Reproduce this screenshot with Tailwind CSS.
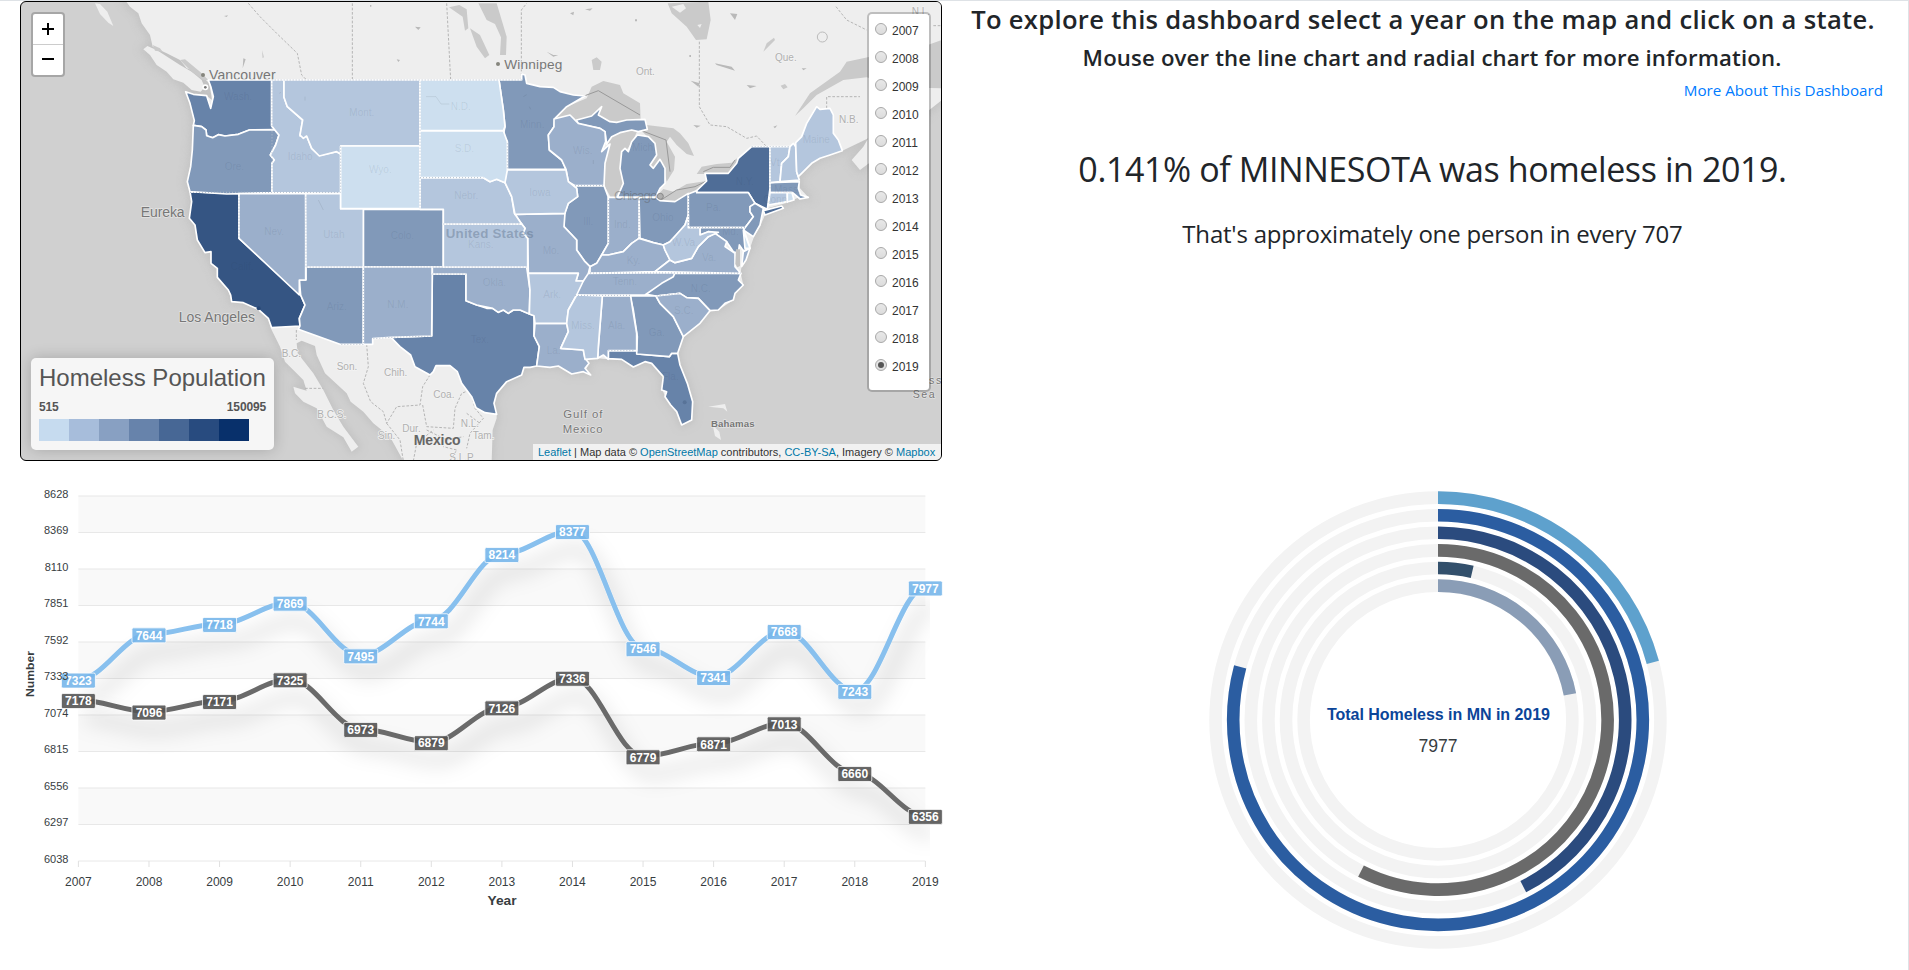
<!DOCTYPE html>
<html lang="en">
<head>
<meta charset="utf-8">
<title>Homeless Population Dashboard</title>
<script src="https://cdn.jsdelivr.net/npm/@tailwindcss/browser@4"></script>
</head>
<body class="bg-white w-[1909px] h-[970px] overflow-hidden font-['Liberation_Sans',sans-serif]">
<div class="flex h-[970px] border-t border-r border-[#dee2e6]">
  <section class="w-[954px] shrink-0 flex flex-col">
    <div class="relative ml-5 w-[922px] h-[460px] rounded-[6px] border border-black overflow-hidden bg-[#d0d0d0]">
      <svg class="absolute -left-px -top-px w-[922px] h-[460px]" viewBox="60 3 2766 1380" font-family="Liberation Sans, Arial, sans-serif">
        <defs>
          <filter id="coast" x="-5%" y="-5%" width="110%" height="110%"><feGaussianBlur stdDeviation="12"/></filter>
          <path id="land" d="M375,0 390,20 415,40 425,70 450,105 458,140 500,160 540,180 560,205 590,215 612,235 628,250 636,300 620,287 580,283 557,275 570,310 583,362 580,376 577,450 572,500 562,545 570,575 575,605 568,655 585,675 592,720 615,758 633,755 633,790 652,805 652,832 685,870 695,905 730,908 775,928 805,955 815,990 840,1040 855,1085 910,1140 920,1172 880,1160 885,1180 910,1205 950,1225 980,1280 1030,1312 1055,1355 1075,1340 1030,1280 1000,1230 970,1170 940,1120 893,1060 890,1030 905,1022 945,1038 950,1065 975,1120 1040,1180 1052,1205 1090,1235 1120,1270 1170,1310 1210,1383 1475,1383 1478,1290 1490,1255 1490,1243 1482,1210 1490,1180 1520,1145 1565,1125 1572,1102 1610,1098 1650,1102 1675,1098 1715,1122 1750,1115 1772,1125 1758,1108 1765,1095 1755,1078 1793,1075 1825,1078 1865,1078 1900,1100 1935,1085 1955,1090 1990,1130 1988,1170 1995,1190 2030,1235 2045,1275 2075,1260 2078,1205 2062,1150 2040,1095 2033,1060 2050,1010 2100,970 2130,932 2155,930 2200,900 2205,880 2230,855 2222,820 2225,795 2250,745 2262,710 2282,675 2295,645 2302,625 2362,608 2400,590 2425,592 2400,565 2395,530 2435,490 2460,475 2527,452 2605,415 2590,440 2555,480 2580,510 2620,480 2700,400 2826,300 2826,0Z"/>
        </defs>
        <g fill="#c3c3c3" stroke="#bcbcbc" stroke-width="14" filter="url(#coast)" opacity=".8"><use href="#land"/><path d="M430,148 452,140 540,190 600,235 610,272 575,272 520,235 500,215 470,195Z"/></g>
        <use href="#land" fill="#eee"/>
        <g fill="#eee">
          <path d="M430,148 442,138 470,150 540,195 575,215 605,240 614,262 602,275 575,270 550,248 520,238 500,215 470,195 450,165Z"/>
          <path d="M285,10 300,12 322,35 340,78 325,68 300,42Z"/>
          <path d="M2125,1220 2175,1212 2182,1235 2170,1225ZM2138,1275 2158,1295 2163,1320 2145,1308Z"/>
        </g>
        <g fill="#cacaca">
          <path d="M1665,355 1700,320 1760,295 1775,260 1810,243 1860,255 1870,280 1895,295 1920,310 1922,360 1830,368 1795,345 1805,320 1775,348 1730,362Z"/>
          <path d="M1815,425 1835,405 1860,398 1890,383 1912,392 1900,420 1880,450 1860,490 1872,550 1852,592 1832,592 1812,555 1812,490 1830,435Z"/>
          <path d="M1915,385 1940,375 2020,385 2040,400 2065,430 2082,468 2060,462 2030,435 2010,410 2000,425 2025,470 2022,510 2000,545 1990,505 1980,478 1960,505 1945,495 1970,465 1965,430Z"/>
          <path d="M1967,592 1990,567 2020,575 2060,552 2120,543 2090,570 2065,582 2025,605 1980,602Z"/>
          <path d="M2090,522 2105,500 2150,492 2195,488 2210,475 2212,492 2185,522Z"/>
          <path d="M1435,10 1490,10 1505,60 1520,110 1518,165 1500,165 1503,112 1485,72 1460,60Z"/>
          <path d="M1347,22 1378,15 1400,28 1405,85 1395,92 1388,50ZM1410,85 1440,105 1468,165 1455,175 1430,140Z"/>
          <path d="M2003,10 2125,5 2132,60 2120,118 2088,120 2060,80 2015,40Z"/>
          <path d="M2385,348 2430,280 2520,215 2540,185 2610,170 2700,165 2826,120 2826,265 2700,262 2600,232 2530,240 2450,285 2410,325Z"/>
          <path d="M2290,155 2300,130 2322,113 2325,120 2305,140ZM2342,257 2355,252 2363,262 2350,268ZM1775,180 1790,172 1805,185 1800,210 1780,210ZM540,180 555,178 600,215 625,240 610,240 575,215ZM458,135 480,145 488,155 465,152Z"/>
        </g>
        <path d="M2015,20 2050,12 2058,25 2040,38ZM2092,75 2105,72 2100,84Z" fill="#eee"/>
        <g fill="none" stroke="#999" stroke-width="3"><path d="M1720,300 1795,272 1920,345M1920,390 1998,420 2010,515M1980,602 2030,570 2085,560 2120,543M2110,515 2140,502 2190,502 2205,480"/></g>
        <g fill="none" stroke="#b5b5b5" stroke-width="3" stroke-dasharray="8 5">
          <path d="M1057,10V240M1340,10 1352,240M1564,240V30L1580,10M2098,125V320L2130,375 2180,380 2240,415 2270,408 2300,440M745,10 780,50 830,100 892,160 905,225 920,240M2480,325V290H2580M2508,20 2540,60 2600,90M2800,77H2826"/>
          <path d="M1100,1033 1105,1100 1090,1150 1112,1205 1150,1235 1160,1270 1190,1220 1260,1215 1268,1160 1290,1125M1268,1215 1280,1280 1360,1285 1365,1225 1385,1180 1410,1170 1425,1225 1450,1255 1410,1300 1400,1345M1160,1270 1200,1320 1210,1383M1280,1290 1340,1320 1390,1310M915,1165H970M889,990V1020M1350,1383 1370,1350 1330,1340M1240,1383 1250,1330 1300,1290M1400,1240 1440,1270"/>
        </g>
        <g fill="#b9b9b9">
          <path d="M1245,80 1262,82 1255,90ZM1110,15h4v5h-4ZM1190,178 1200,180 1195,186ZM672,48 684,46 680,51ZM787,150 791,172 788,174ZM730,175 737,178 728,205ZM2190,40 2212,42 2205,60ZM2072,242 2100,250 2095,260ZM2240,255 2270,258 2250,265ZM2080,375 2102,377 2090,383ZM2405,205 2420,205 2410,211ZM2145,190 2195,200 2205,212 2150,195ZM1905,58h6v6h-6ZM2068,165h5v6h-5ZM2320,380 2332,376 2325,385ZM1640,155 1660,165 1675,165 1660,170ZM1755,28 1778,25 1770,32ZM1710,40 1722,35 1720,46Z"/>
        </g>
        <circle cx="2467" cy="111" r="15" fill="none" stroke="#bbb" stroke-width="3"/>
        <g fill="#fff" stroke="#fff" stroke-width="5" stroke-linejoin="round">
          <g fill="#6783a9">
            <path d="M557,275 580,283 620,287 632,325 640,290 633,262 625,240 815,240 815,378 824,389 748,390 715,403 675,408 655,404 638,413 620,407 618,390 605,380 580,376 583,362 570,310Z"/>
            <path d="M1297,822 1398,822 1398,902 1430,915 1460,925 1478,925 1495,937 1510,930 1525,940 1540,930 1560,930 1602,947 1602,1008 1618,1040 1610,1098 1590,1102 1572,1102 1565,1125 1520,1145 1490,1180 1482,1210 1490,1243 1455,1238 1428,1223 1415,1190 1385,1150 1372,1115 1350,1097 1308,1097 1300,1115 1290,1125 1245,1100 1232,1065 1200,1040 1173,1012 1295,1008Z"/>
            <path d="M1825,1052 1910,1052 1912,1062 2008,1070 2015,1060 2033,1060 2040,1095 2062,1150 2078,1205 2075,1260 2045,1275 2030,1235 2012,1215 1995,1190 2000,1175 1985,1170 1990,1130 1955,1090 1935,1085 1900,1101 1865,1078 1825,1076Z"/>
          </g>
          <path fill="#355583" d="M570,575 717,581 717,715 902,885 915,915 898,955 900,978 815,983 805,955 775,928 730,908 695,905 692,885 685,870 652,832 652,805 633,790 633,755 615,758 592,720 585,675 568,655 575,605Z"/>
          <path fill="#4f6d97" d="M2090,572 2120,543 2115,520 2185,520 2210,490 2215,475 2255,440 2310,440 2310,565 2302,628 2265,610 2245,578 2090,578ZM2290,632 2345,618 2350,625 2295,645Z"/>
          <g fill="#8199b9">
            <path d="M580,376 605,380 618,390 620,407 638,413 655,404 675,408 715,403 748,390 824,389 837,405 827,435 811,465 823,480 816,490 816,578 680,582 570,575 562,545 572,500 577,450Z"/>
            <path d="M1090,628H1330V801H1090Z"/>
            <path d="M918,801H1090V1033H1020L895,988 900,978 898,955 915,915 902,885 898,840H918Z"/>
            <path d="M1497,240H1565V222L1575,225 1580,250 1620,260 1660,262 1680,275 1720,285 1755,288 1700,320 1665,355 1662,380 1645,405 1648,450 1685,480 1698,508H1522V425L1510,405 1515,380 1510,330Z"/>
            <path d="M1730,360 1775,348 1805,320 1795,345 1830,365 1850,367 1880,360 1935,358 1942,388 1915,395 1895,390 1860,398 1835,410 1820,432 1815,395 1800,385 1735,372Z"/>
            <path d="M1912,405 1895,425 1885,455 1875,445 1865,455 1860,505 1870,550 1852,592H1967L1980,565 1995,550V505L1980,478 1960,505 1950,495 1970,465 1965,430 1945,410Z"/>
            <path d="M1725,557H1812L1825,592V730L1805,765 1790,790 1770,800 1755,785 1730,750V720L1692,680V645L1705,610 1733,590 1730,565Z"/>
            <path d="M1917,592H1967L1980,602 2025,605 2065,580V645L2055,675 2030,705 2010,725 1990,735 1960,728 1920,715Z"/>
            <path d="M2065,582 2090,572V578H2245L2265,610 2250,620V635L2260,650 2235,683H2065Z"/>
            <path d="M2265,610 2290,625 2285,650 2280,675 2260,710 2230,690 2260,650 2250,635V620Z"/>
            <path d="M2025,820H2223L2215,840 2230,855 2205,880 2200,900 2175,910 2155,930 2130,932 2095,895 2060,893 2040,880 1968,888 1935,882 1985,845Z"/>
            <path d="M1890,888H1968L1980,910 2020,950 2050,1010 2033,1060 2015,1060 2008,1070 1910,1062 1912,1010 1900,930Z"/>
            <path d="M2310,548 2398,545 2395,565 2402,585 2425,592 2400,597 2378,578H2310Z"/>
            <path d="M2100,683H2230L2250,745 2230,752 2218,735 2215,760 2200,755 2180,725 2145,700 2125,695 2100,705Z"/>
          </g>
          <g fill="#9bafcb">
            <path d="M717,581H917V840H898V885L717,715Z"/>
            <path d="M1090,801H1297L1295,1008 1173,1012 1118,1016V1033H1090Z"/>
            <path d="M1297,801H1580L1590,870 1588,942 1560,930 1540,930 1525,940 1510,930 1495,937 1478,925 1430,915 1398,902V822H1297Z"/>
            <path d="M1662,357 1710,345 1735,370 1800,385 1815,395 1817,425 1805,455 1830,432 1815,490 1812,557H1725L1705,545 1698,508 1685,480 1648,450 1645,405 1662,380Z"/>
            <path d="M1825,592H1917V715L1895,730 1870,755 1825,765H1805L1825,730Z"/>
            <path d="M1770,800 1790,790 1805,765 1825,765 1870,755 1895,730 1917,715 1960,728 1990,735 1995,750 2010,780 1965,815 1770,820Z"/>
            <path d="M1750,820 2025,818 2020,830 1985,850 1935,885H1725L1740,850Z"/>
            <path d="M1545,643 1695,640 1692,680 1730,720V750L1755,785 1770,800 1765,820 1750,843H1728L1735,820H1585L1583,715 1570,700 1575,685 1560,665Z"/>
            <path d="M1605,970H1700L1705,995 1682,1045 1750,1050 1755,1075 1767,1090 1755,1105 1772,1125 1750,1115 1715,1122 1675,1098 1650,1102 1610,1098 1618,1040 1602,1008Z"/>
            <path d="M1807,888H1892L1900,940 1910,1000V1052H1825V1078L1810,1065 1793,1075 1795,1040Z"/>
            <path d="M1968,888 2040,880 2060,893 2095,895 2130,932 2100,970 2050,1010 2020,950 1980,910Z"/>
            <path d="M1965,815 2010,780 2025,788 2075,775 2095,740 2125,710 2145,700 2180,725 2175,740 2205,760V800L2222,820ZM2230,755 2250,745 2238,780 2225,800Z"/>
          </g>
          <g fill="#b4c6dd">
            <path d="M816,578V490L823,480 811,465 827,435 837,405 824,389 815,378V240H852V292L862,320 908,360 900,408 920,408 935,445 958,466 1010,455 1022,462V580Z"/>
            <path d="M852,240H1260V438H1022V462L1010,455 958,468 935,445 920,408 910,415 900,405 908,360 862,320 852,292Z"/>
            <path d="M917,581H1022V626H1090V801H918Z"/>
            <path d="M1330,672H1565L1575,685 1570,700 1583,715V801H1330Z"/>
            <path d="M1260,533H1450L1470,545 1490,538 1515,548 1535,590 1543,640 1565,672H1330V628H1260Z"/>
            <path d="M1518,510H1698L1705,545 1730,565 1733,590 1705,610 1695,640 1545,643 1535,590 1515,548Z"/>
            <path d="M1585,820H1735L1728,843H1750L1730,885 1705,930 1700,970H1605L1602,947 1588,942 1590,870Z"/>
            <path d="M1730,885 1807,888 1795,1040 1793,1075 1755,1078 1750,1050 1682,1045 1705,995 1700,970 1705,930Z"/>
            <path d="M1990,735 2010,725 2055,675 2065,645V683H2100V705L2125,695 2155,697 2125,710 2095,740 2075,775 2025,788 2010,780 1995,750Z"/>
            <path d="M2310,440H2370L2365,470 2345,490 2340,545 2310,548Z"/>
            <path d="M2370,440 2380,430 2387,440 2390,515 2398,540 2340,545 2345,490 2365,470Z"/>
            <path d="M2387,428 2405,410 2420,370 2450,320 2460,328 2490,325 2500,345V400L2515,420 2527,452 2490,465 2460,475 2435,490 2395,530 2390,515Z"/>
            <path d="M2310,578H2362V605L2305,615Z"/>
          </g>
          <g fill="#cddfef">
            <path d="M1022,438H1260V626H1022Z"/>
            <path d="M1260,392H1510L1522,425V510L1515,548 1490,538 1470,545 1450,533H1260Z"/>
            <path d="M1260,240H1497L1510,330 1515,380 1510,392H1260Z"/>
            <path d="M2230,690 2250,745H2235ZM2362,578H2376L2382,600 2362,606Z"/>
          </g>
        </g>
        <path d="M2208,748h12v50l-8,4-6-10Z" fill="#c3c3c3"/>
        <path d="M815,240H1565M816,250V570M570,577H1022M717,590V710M918,590V800M920,801H1580M1090,810V1033M1120,1016 1173,1012 1295,1008M1090,1033 1020,1033M1297,822H1398M1330,672H1560M1522,430V505M1725,557H1812M1825,600V730M1917,600V710M1770,819H2222M1725,886H1890M1970,888 2040,880M1260,533H1450M1825,1052H1905M1022,440V575M2065,585V683M2070,683H2235M2255,440H2370M2310,445V570M1260,245V625" fill="none" stroke="#b4bfcd" stroke-width="3" stroke-dasharray="3 6"/>
        <g fill="none" stroke="#000" stroke-opacity=".07" stroke-width="3"><path d="M1278,290h30l15,22h25M918,750h1M955,600l15,30M1570,290l10-6M1588,320l4 8M1780,480v12M838,280l5-3M915,290v12"/></g>
        <g font-size="30" fill="#2c4059" fill-opacity=".11">
          <text x="672" y="300">Wash.</text><text x="674" y="511">Ore.</text><text x="863" y="480">Idaho</text><text x="793" y="704">Nev.</text><text x="970" y="714">Utah</text><text x="692" y="810">Calif.</text><text x="1048" y="348">Mont.</text><text x="1352" y="329">N.D.</text><text x="1364" y="456">S.D.</text><text x="1107" y="519">Wyo.</text><text x="1363" y="597">Nebr.</text><text x="1560" y="384">Minn.</text><text x="1719" y="463">Wis.</text><text x="1588" y="587">Iowa</text><text x="1750" y="674">Ill.</text><text x="1842" y="685">Ind.</text><text x="1172" y="717">Colo.</text><text x="1404" y="745">Kans.</text><text x="1628" y="762">Mo.</text><text x="1880" y="792">Ky.</text><text x="1448" y="859">Okla.</text><text x="1630" y="893">Ark.</text><text x="1838" y="855">Tenn.</text><text x="980" y="930">Ariz.</text><text x="1162" y="924">N.M.</text><text x="1412" y="1028">Tex.</text><text x="1640" y="1062">La.</text><text x="1714" y="986">Miss.</text><text x="1824" y="986">Ala.</text><text x="1946" y="1007">Ga.</text><text x="1986" y="1141">Fla.</text><text x="2022" y="942">S.C.</text><text x="2072" y="875">N.C.</text><text x="2106" y="783">Va.</text><text x="2016" y="738">W.Va.</text><text x="2166" y="705">Md.</text><text x="2118" y="632">Pa.</text><text x="1957" y="664">Ohio</text><text x="1896" y="453">Mich.</text><text x="2207" y="556">N.Y.</text><text x="2310" y="497">Vt.</text><text x="2408" y="430">Maine</text><text x="2322" y="578">Mass.</text><text x="2290" y="610">Conn.</text>
        </g>
        <g font-size="30" fill="#b0b0b0" stroke="#f4f4f4" stroke-width="4" paint-order="stroke">
          <text x="1908" y="226">Ont.</text><text x="2325" y="184">Que.</text><text x="2517" y="370">N.B.</text><text x="2735" y="44">N.L.</text><text x="845" y="1070">B.C.</text><text x="1010" y="1110">Son.</text><text x="1152" y="1129">Chih.</text><text x="1300" y="1193">Coa.</text><text x="952" y="1254">B.C.S.</text><text x="1207" y="1296">Dur.</text><text x="1134" y="1318">Sin.</text><text x="1382" y="1282">N.L.</text><text x="1418" y="1318">Tam.</text><text x="1348" y="1383">S.L.P.</text>
        </g>
        <g fill="#777" stroke="#f0f0f0" stroke-width="4" stroke-opacity=".6" paint-order="stroke">
          <text x="1513" y="207" font-size="41" textLength="174">Winnipeg</text><text x="422" y="650" font-size="42" textLength="132">Eureka</text><text x="536" y="965" font-size="42" textLength="229">Los Angeles</text>
          <svg x="600" y="190" width="300" height="48" viewBox="600 190 300 48"><text x="627" y="240" font-size="42" textLength="200">Vancouver</text></svg>
          <text x="1241" y="1335" font-size="42" font-weight="700" textLength="141" fill="#666">Mexico</text>
          <text x="2133" y="1282" font-size="29" font-weight="700" textLength="131">Bahamas</text>
          <text x="1690" y="1254" font-size="34" textLength="117">Gulf of</text><text x="1688" y="1298" font-size="34" textLength="120">Mexico</text>
          <text x="2787" y="1151" font-size="32" textLength="37">ss</text><text x="2738" y="1194" font-size="32" textLength="66">Sea</text>
        </g>
        <text x="1337" y="714" font-size="40" font-weight="700" textLength="264" fill="#50657f" fill-opacity=".38">United States</text>
        <text x="1842" y="601" font-size="40" textLength="130" fill="#555" fill-opacity=".4">Chicago</text>
        <circle cx="1494" cy="192" r="6" fill="#85857d"/><circle cx="609" cy="225" r="6" fill="#85857d"/><circle cx="616" cy="262" r="4" fill="#777" stroke="#fff" stroke-width="10" paint-order="stroke"/><circle cx="1981" cy="589" r="9" fill="#888" fill-opacity=".4" stroke="#888" stroke-width="3"/><circle cx="776" cy="925" r="6" fill="#284876"/><circle cx="2054" cy="1207" r="6" fill="#587398"/>
      </svg>

      <div class="absolute left-[10px] top-[10px] w-[34px] rounded-[4px] border-2 border-black/20 bg-clip-padding bg-white text-black font-bold">
        <div class="h-[31px] border-b border-[#ccc] flex items-center justify-center"><svg class="w-3 h-3" viewBox="0 0 12 12"><path d="M6 0v12M0 6h12" stroke="#000" stroke-width="2"/></svg></div>
        <div class="h-[30px] flex items-center justify-center"><svg class="w-3 h-3" viewBox="0 0 12 12"><path d="M0 5h12" stroke="#000" stroke-width="2"/></svg></div>
      </div>

      <div id="years" class="absolute right-[10px] top-[10px] w-[64px] h-[380px] rounded-[5px] border-2 border-black/20 bg-clip-padding bg-white pt-px pl-[6px] text-[12px] text-[#333]"></div>

      <div class="absolute left-[10px] bottom-[10px] w-[243px] h-[92px] rounded-[5px] bg-[#f6f6f6] shadow-[0_0_15px_rgba(0,0,0,0.2)] px-2 pt-[5px] text-[#555]">
        <div class="text-[24px] leading-[29px] whitespace-nowrap">Homeless Population</div>
        <div class="mt-[6px] flex justify-between text-[12px] leading-[18px] font-bold tracking-[-0.15px]"><span>515</span><span>150095</span></div>
        <div class="mt-[3px] flex h-[22px]">
          <i class="w-[30px] bg-[#c6dbef]"></i><i class="w-[30px] bg-[#a7bddb]"></i><i class="w-[30px] bg-[#88a0c2]"></i><i class="w-[30px] bg-[#6783ab]"></i><i class="w-[30px] bg-[#476795]"></i><i class="w-[30px] bg-[#284b7f]"></i><i class="w-[30px] bg-[#08306b]"></i>
        </div>
      </div>

      <div class="absolute right-0 bottom-0 h-4 w-[408px] bg-white/70 pl-[5px] text-[11px] leading-[16px] text-[#333] whitespace-nowrap"><span class="text-[#0078a8]">Leaflet</span> | Map data © <span class="text-[#0078a8]">OpenStreetMap</span> contributors, <span class="text-[#0078a8]">CC-BY-SA</span>, Imagery © <span class="text-[#0078a8]">Mapbox</span></div>
    </div>
    <svg id="line" class="w-[954px] h-[460px]" viewBox="0 461 954 460" font-family="Liberation Sans, Arial, sans-serif"></svg>
  </section>

  <section class="flex-1 flex flex-col items-center text-[#212529] font-['Open_Sans','Noto_Sans',sans-serif] whitespace-nowrap">
    <h4 class="pr-[16px] mt-[2px] h-[34px] leading-[34px] text-[25.6px] font-semibold tracking-[0.3px]">To explore this dashboard select a year on the map and click on a state.</h4>
    <h5 class="pl-[2px] mt-[6px] h-[30px] leading-[30px] text-[22.2px] font-semibold tracking-[0.15px]">Mouse over the line chart and radial chart for more information.</h5>
    <div class="w-full mt-[5px] pr-[25px] text-right h-6 leading-6 text-[15.2px] text-[#007bff]">More About This Dashboard</div>
    <h2 class="pl-[3px] mt-[43px] h-[48px] leading-[48px] text-[34px] tracking-[-0.4px]">0.141% of MINNESOTA was homeless in 2019.</h2>
    <h4 class="pl-[3px] mt-[23px] h-[36px] leading-[36px] text-[24px] tracking-[-0.2px]">That's approximately one person in every 707</h4>
    <svg id="radial" class="mt-[228px] shrink-0 w-[484px] h-[480px] translate-x-[7px]" viewBox="1196 480 484 480" font-family="Liberation Sans, Arial, sans-serif"></svg>
  </section>
</div>
<script>
document.getElementById('years').innerHTML = Array.from({length: 13}, (_, i) => {
  const dot = i === 12 ? '<i class="w-[6px] h-[6px] rounded-full bg-[#555]"></i>' : '';
  return '<label class="flex items-center h-[28px]"><span class="w-3 h-3 rounded-full border border-[#a8a8a8] bg-linear-to-b from-[#e8e8e8] to-[#dcdcdc] flex items-center justify-center">' + dot + '</span><span class="ml-[5px] mt-[3px]">' + (2007 + i) + '</span></label>';
}).join('');

const X = i => 78.4 + i * 70.58, Y = v => 495.7 + (8628 - v) / 2590 * 365;
const totals = [7323,7644,7718,7869,7495,7744,8214,8377,7546,7341,7668,7243,7977];
const sheltered = [7178,7096,7171,7325,6973,6879,7126,7336,6779,6871,7013,6660,6356];
let s = '<defs><filter id="sh" filterUnits="userSpaceOnUse" x="78" y="461" width="852" height="400"><feDropShadow dx="7" dy="18" stdDeviation="10" flood-color="#000" flood-opacity=".25"/></filter></defs>';
for (let i = 0; i < 10; i += 2) s += `<rect x="78.4" y="${495.7 + i * 36.5}" width="847" height="36.5" fill="#f9f9f9"/>`;
for (let i = 0; i <= 10; i++) s += `<path d="M78.4 ${Math.round(495.5 + i * 36.5) + .5 - (i % 2 ? 0 : 0.5)}H925.4" stroke="#e8e8e8"/>`;
for (let i = 0; i < 13; i++) s += `<path d="M${X(i)} 861v6" stroke="#e0e0e0"/><text x="${X(i)}" y="885.7" font-size="12" text-anchor="middle" fill="#373d3f">${2007 + i}</text>`;
const curve = d => 'M' + X(0) + ',' + Y(d[0]) + d.slice(1).map((v, i) => `C${X(i) + 24.7},${Y(d[i])} ${X(i + 1) - 24.7},${Y(v)} ${X(i + 1)},${Y(v)}`).join('');
s += `<g filter="url(#sh)"><path d="${curve(totals)}" fill="none" stroke="#88c0ee" stroke-width="5"/></g>`;
s += `<g filter="url(#sh)"><path d="${curve(sheltered)}" fill="none" stroke="#6a6a6a" stroke-width="5"/></g>`;
[[totals, '#77b6ea'], [sheltered, '#545454']].forEach(([d, c]) => d.forEach((v, i) => {
  s += `<rect x="${X(i) - 17}" y="${Y(v) - 6.5}" width="34" height="15" rx="1.5" fill="${c}" fill-opacity=".9" stroke="#fff" stroke-opacity=".8"/><text x="${X(i)}" y="${Y(v) + 5.3}" font-size="12" font-weight="700" text-anchor="middle" fill="#fff">${v}</text>`;
}));
for (let i = 0; i <= 10; i++) s += `<text x="68.4" y="${497.9 + i * 36.5}" font-size="11" text-anchor="end" fill="#373d3f">${8628 - i * 259}</text>`;
s += '<text x="502" y="905" font-size="12" font-weight="700" text-anchor="middle" textLength="29" lengthAdjust="spacingAndGlyphs" fill="#373d3f">Year</text>';
s += '<text transform="translate(34 674) rotate(-90)" font-size="11" font-weight="700" text-anchor="middle" textLength="46" lengthAdjust="spacingAndGlyphs" fill="#373d3f">Number</text>';
document.getElementById('line').innerHTML = s;

const rings = [[75,'#5ea1cd'],[285,'#2b5da1'],[152.9,'#2b4b7e'],[207,'#6a6a6a'],[13,'#33506c'],[79,'#8a9db6']];
document.getElementById('radial').innerHTML = rings.map(([a, c], i) => {
  const r = 222.4 - i * 17.6, t = a * Math.PI / 180;
  return `<circle cx="1438" cy="720" r="${r}" fill="none" stroke="#f3f3f3" stroke-width="12.6"/><path d="M1438 ${720 - r}A${r} ${r} 0 ${a > 180 ? 1 : 0} 1 ${1438 + r * Math.sin(t)} ${720 - r * Math.cos(t)}" fill="none" stroke="${c}" stroke-width="12.6"/>`;
}).join('') + '<text x="1438.5" y="720" font-size="16" font-weight="700" text-anchor="middle" textLength="223" fill="#0b4599">Total Homeless in MN in 2019</text><text x="1438" y="752" font-size="17.6" text-anchor="middle" fill="#373d3f">7977</text>';
</script>
</body>
</html>
